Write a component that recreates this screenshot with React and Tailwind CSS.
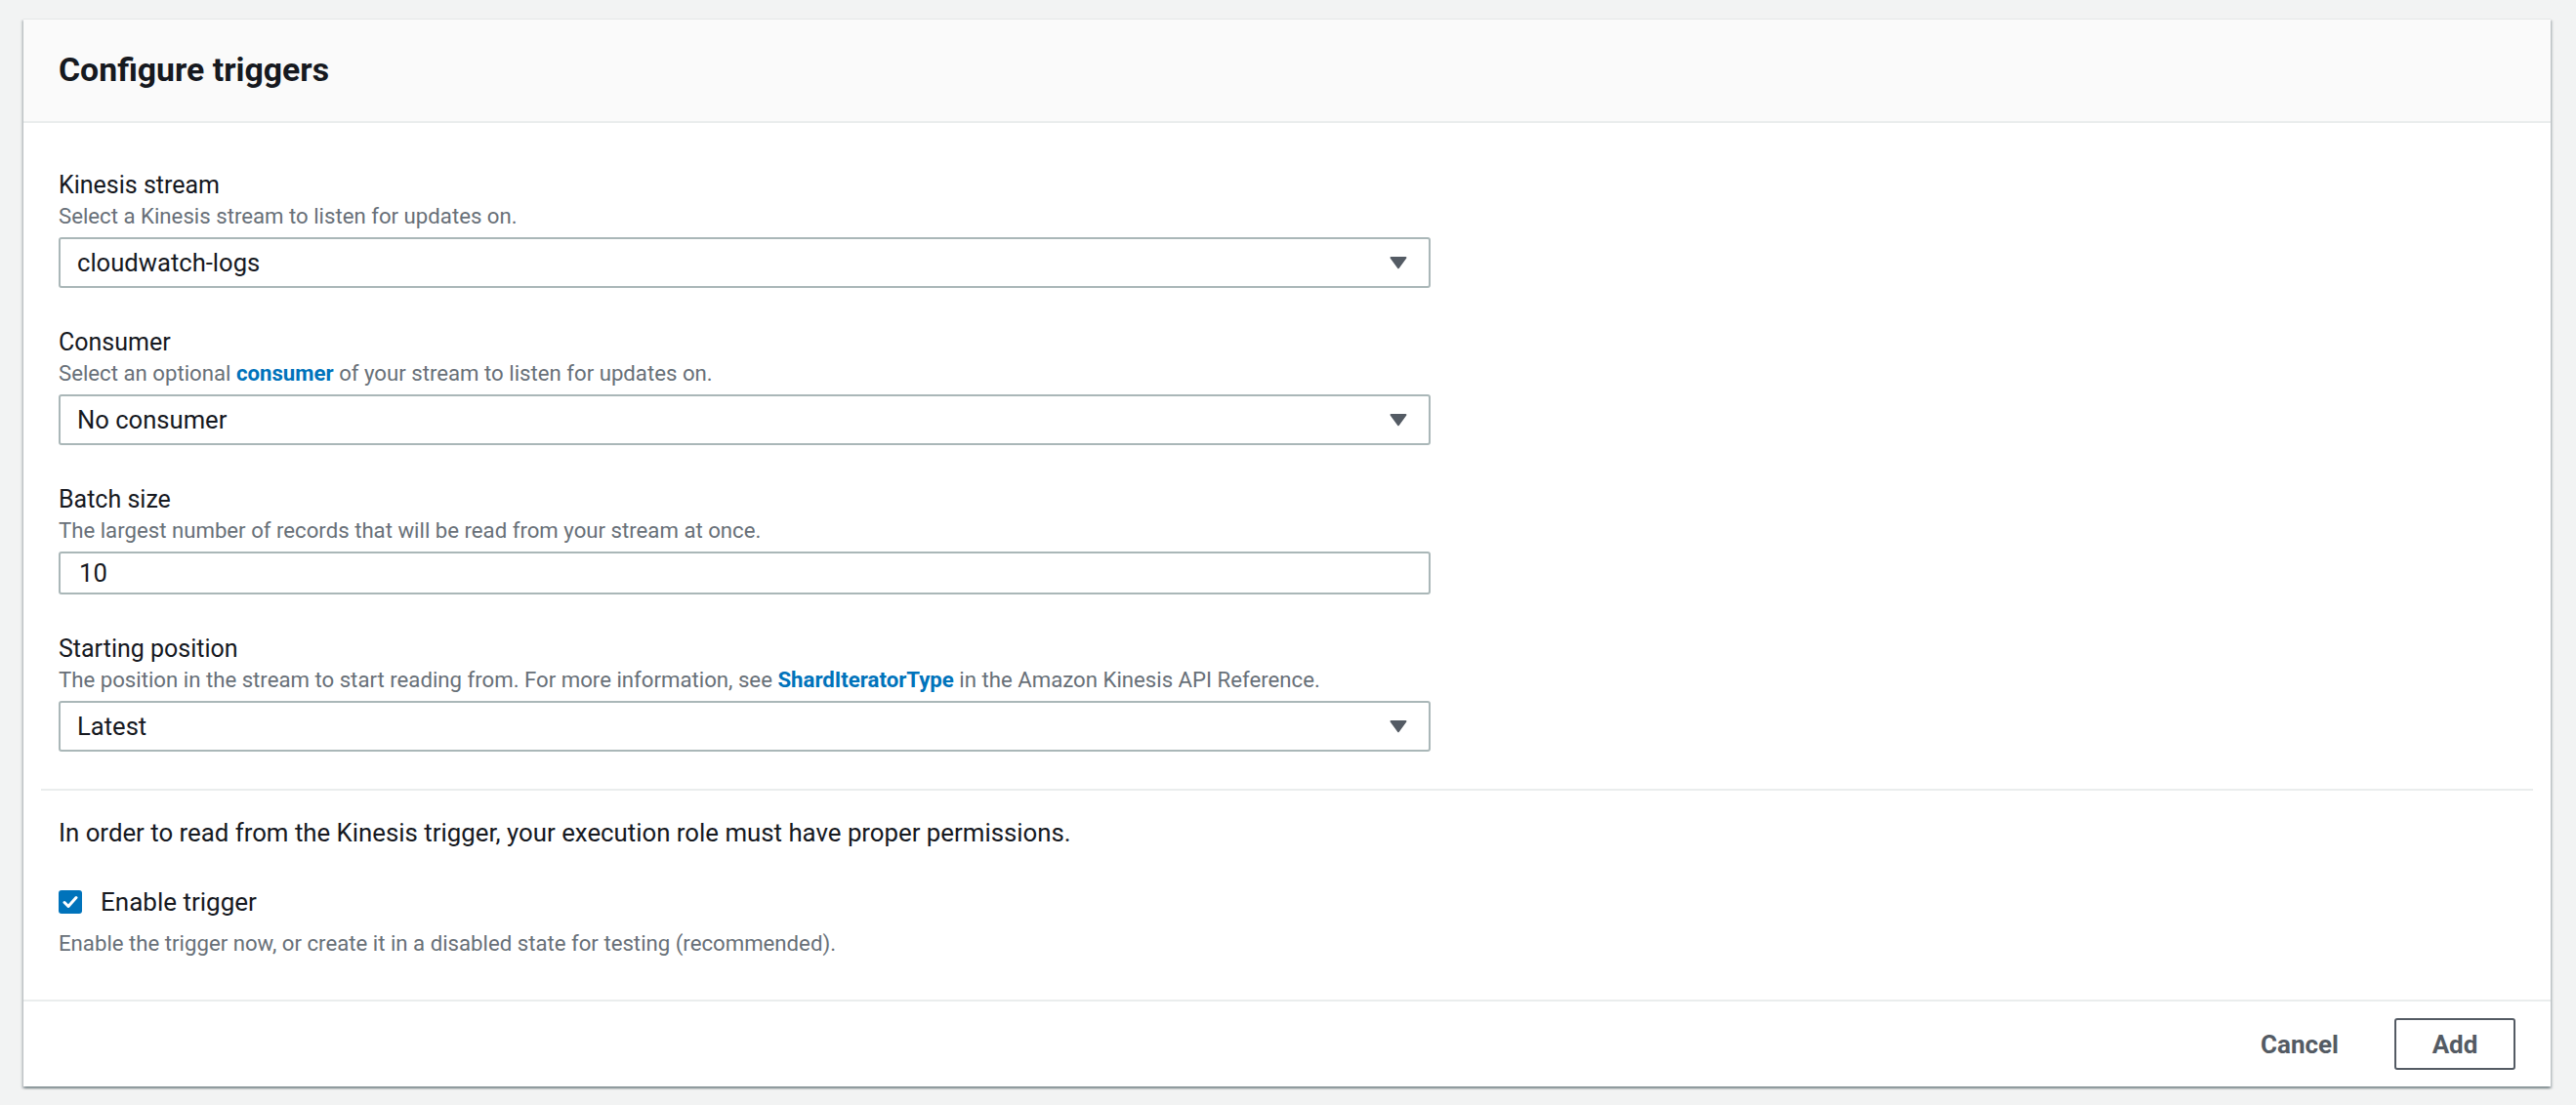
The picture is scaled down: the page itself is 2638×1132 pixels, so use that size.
import React from "react";

function Caret() {
  return (
    <svg width="18" height="14" viewBox="0 0 18 14" className="shrink-0">
      <path d="M1.5 1h15a1 1 0 0 1 .8 1.6l-7.5 10.2a1 1 0 0 1-1.6 0L0.7 2.6A1 1 0 0 1 1.5 1z" fill="#545b64" />
    </svg>
  );
}

function Field({ label, desc, children }) {
  return (
    <div className="flex flex-col">
      <div className="text-[25px] leading-[32px] text-[#16191f]">{label}</div>
      <div className="mt-[1px] text-[22.2px] leading-[28px] text-[#687078]">{desc}</div>
      <div className="mt-[8px]">{children}</div>
    </div>
  );
}

function Select({ value }) {
  return (
    <div className="flex h-[52px] w-[1405px] items-center justify-between rounded-[3px] border-2 border-[#aab7b8] bg-white pl-[17px] pr-[22px]">
      <span className="text-[25.6px] leading-[30px] text-[#16191f]">{value}</span>
      <Caret />
    </div>
  );
}

export default function App() {
  return (
    <div
      className="min-h-[1132px] w-full bg-[#f2f3f3] pt-[19px] pl-[24px]"
      style={{ fontFamily: "Roboto, 'Liberation Sans', sans-serif" }}
    >
      <div className="w-[2588px] border-t border-[#e4e7e7] bg-white shadow-[0_2px_2px_0_rgba(0,28,36,0.3),2px_2px_2px_0_rgba(0,28,36,0.15),-2px_2px_2px_0_rgba(0,28,36,0.15)]">
        {/* Header */}
        <div className="flex h-[106px] items-center border-b-2 border-[#eaeded] bg-[#fafafa] px-[36px]">
          <h2 className="text-[33.8px] font-bold leading-[40px] text-[#16191f]">Configure triggers</h2>
        </div>

        {/* Form */}
        <div className="flex flex-col gap-[40px] px-[36px] pt-[48px] pb-[38px]">
          <Field label="Kinesis stream" desc="Select a Kinesis stream to listen for updates on.">
            <Select value="cloudwatch-logs" />
          </Field>
          <Field
            label="Consumer"
            desc={
              <>
                Select an optional <span className="font-bold text-[#0073bb]">consumer</span> of your stream to listen for updates on.
              </>
            }
          >
            <Select value="No consumer" />
          </Field>
          <Field label="Batch size" desc="The largest number of records that will be read from your stream at once.">
            <div className="flex h-[44px] w-[1405px] items-center rounded-[3px] border-2 border-[#aab7b8] bg-white pl-[19px]">
              <span className="text-[25.6px] leading-[30px] text-[#16191f]">10</span>
            </div>
          </Field>
          <Field
            label="Starting position"
            desc={
              <>
                The position in the stream to start reading from. For more information, see{" "}
                <span className="font-bold text-[#0073bb]">ShardIteratorType</span> in the Amazon Kinesis API Reference.
              </>
            }
          >
            <Select value="Latest" />
          </Field>
        </div>

        <div className="mx-[18px] h-[2px] bg-[#eaeded]" />

        {/* Permissions */}
        <div className="flex flex-col px-[36px] pt-[27px] pb-[44px]">
          <p className="text-[25.8px] leading-[32px] text-[#16191f]">
            In order to read from the Kinesis trigger, your execution role must have proper permissions.
          </p>
          <div className="mt-[39px] flex h-[32px] items-center gap-[19px]">
            <div className="flex h-[24px] w-[24px] items-center justify-center rounded-[3px] bg-[#0073bb]">
              <svg width="16" height="14" viewBox="0 0 16 14">
                <path d="M2 7.5l4 4L14 2.5" fill="none" stroke="white" strokeWidth="3" strokeLinecap="round" strokeLinejoin="round" />
              </svg>
            </div>
            <span className="text-[26px] leading-[32px] text-[#16191f]">Enable trigger</span>
          </div>
          <div className="mt-[12px] text-[22.2px] leading-[28px] text-[#687078]">
            Enable the trigger now, or create it in a disabled state for testing (recommended).
          </div>
        </div>

        {/* Footer */}
        <div className="flex h-[89px] items-center justify-end gap-[57px] border-t-2 border-[#eaeded] pr-[36px]">
          <button className="text-[26px] font-bold leading-[32px] text-[#545b64]">Cancel</button>
          <button className="flex h-[53px] w-[124px] items-center justify-center rounded-[3px] border-2 border-[#545b64] text-[26px] font-bold leading-[32px] text-[#545b64]">
            Add
          </button>
        </div>
      </div>
    </div>
  );
}
